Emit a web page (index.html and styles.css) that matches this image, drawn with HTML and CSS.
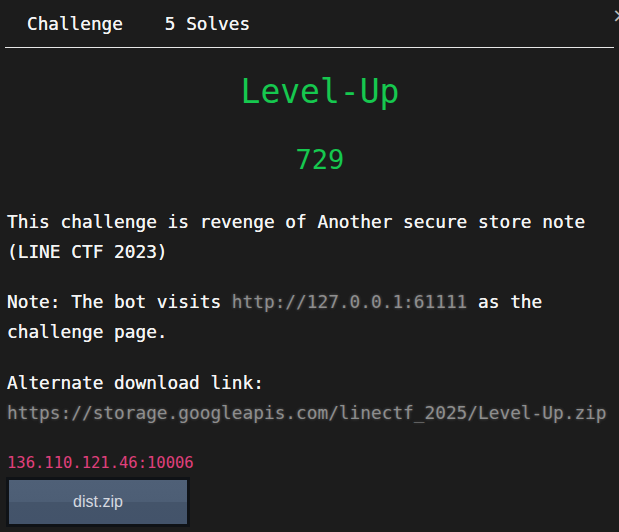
FILE: index.html
```html
<!DOCTYPE html>
<html>
<head>
<meta charset="utf-8">
<link rel="stylesheet" href="styles.css">
</head>
<body>
<div class="modal">
  <span class="close">×</span>
  <nav class="tabs">
    <span class="tab">Challenge</span>
    <span class="tab">5 Solves</span>
  </nav>
  <div class="content">
    <h1 class="title">Level-Up</h1>
    <h2 class="points">729</h2>
    <p class="desc desc-first">This challenge is revenge of Another secure store note (LINE CTF 2023)</p>
    <p class="desc">Note: The bot visits <code class="code">http://127.0.0.1:61111</code> as the challenge page.</p>
    <p class="desc">Alternate download link: <code class="code">https://storage.googleapis.com/linectf_2025/Level-Up.zip</code></p>
    <div class="conn">136.110.121.46:10006</div>
    <button class="file-btn">dist.zip</button>
  </div>
</div>
</body>
</html>
```

FILE: styles.css
```css
html, body {
  margin: 0;
  padding: 0;
  background: #1c1c1c;
  overflow: hidden;
}
body {
  width: 619px;
  height: 532px;
  font-family: "DejaVu Sans Mono", "Liberation Mono", monospace;
  color: #f2f2f2;
}
.modal {
  position: relative;
  width: 640px;
}
.close {
  position: absolute;
  left: 612px;
  top: 3px;
  font-size: 20px;
  color: #bbb;
  font-family: "DejaVu Sans", sans-serif;
}
.tabs {
  display: flex;
  gap: 42px;
  margin-left: 5px;
  width: 609px;
  padding: 12px 0 0 22px;
  box-sizing: border-box;
  height: 48px;
  border-bottom: 1px solid #e6e6e6;
}
.tab {
  font-size: 17.7px;
  line-height: 24px;
  color: #f4f4f4;
  text-shadow: 0 0 0.6px #fff;
}
.content {
  width: 626px;
  padding-left: 7px;
}
.title {
  margin: 21px 0 0 0;
  text-align: center;
  font-weight: normal;
  font-size: 33px;
  line-height: 46px;
  color: #16c84f;
}
.points {
  margin: 25px 0 0 0;
  text-align: center;
  font-weight: normal;
  font-size: 27px;
  line-height: 40px;
  color: #16c84f;
}
.desc {
  margin: 20px 0 0 0;
  font-size: 17.8px;
  line-height: 30px;
  color: #f4f4f4;
  text-shadow: 0 0 0.6px #fff;
}
.desc-first {
  margin-top: 27px;
}
.desc + .desc + .desc {
  margin-top: 21px;
}
.code {
  font-family: "DejaVu Sans Mono", monospace;
  font-size: 17.8px;
  line-height: 30px;
  color: #8e8e8e;
  text-shadow: 0 0 3px rgba(170,170,170,0.45);
}
.conn {
  margin-top: 26px;
  font-size: 15.5px;
  line-height: 18px;
  color: #e0407c;
}
.file-btn {
  display: block;
  margin: 5px 0 0 -1px;
  width: 184px;
  height: 50px;
  border: 3px solid #0f1216;
  background: linear-gradient(#4f6077 0%, #4d5e75 50%, #44546a 51%, #43536a 100%);
  color: #d6dae0;
  font-family: "Liberation Sans", Arial, sans-serif;
  font-size: 16px;
}
```
